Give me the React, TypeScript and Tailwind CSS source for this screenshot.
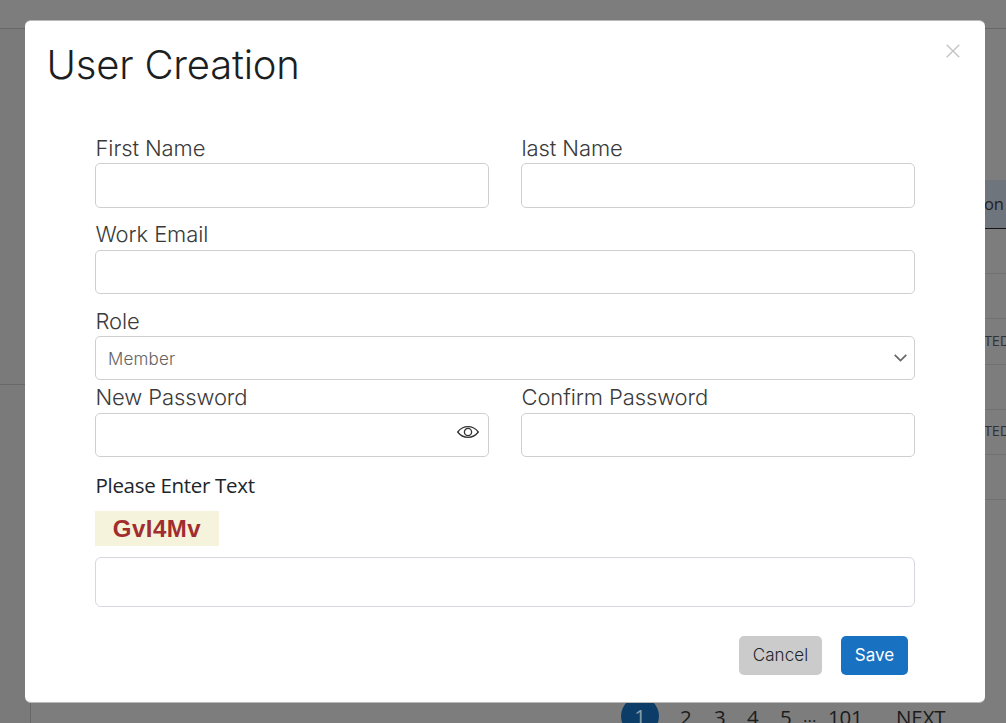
import type { ReactNode } from "react";

const inter = "font-['Inter',sans-serif]";
const field = "block w-full rounded-[5px] border border-[#cfcfcf] bg-white outline-none";

function Label({ children }: { children: ReactNode }) {
  return (
    <label className="block h-[30px] whitespace-nowrap pl-[0.5px] text-[22px] leading-[30px] font-light tracking-[-0.1px] text-[#3a3a3a]">
      {children}
    </label>
  );
}

function Background() {
  const rows = ["", "", "COMPLETED", "", "COMPLETED", ""];
  return (
    <div className="flex h-full flex-col bg-[#7d7d7d] font-['Open_Sans','Noto_Sans',sans-serif]">
      <header className="h-[29px] shrink-0 border-b border-[#686868]" />
      <div className="flex min-h-0 flex-1">
        <aside className="w-[31px] shrink-0 border-r border-[#686868] bg-[#7a7a7a]">
          <div className="h-[356px] border-b border-[#686868]" />
        </aside>
        <main className="flex min-w-0 flex-1 flex-col pt-[151px]">
          <div className="flex h-[49px] shrink-0 items-center justify-end border-b border-[#151515] bg-[#6f757d] pr-[2px] text-[16.500px] text-[#222]">
            Action
          </div>
          {rows.map((text, i) => (
            <div
              key={i}
              className="flex h-[45.2px] shrink-0 items-center justify-end overflow-hidden border-b border-[#717171] pb-px text-[14.500px] tracking-[-0.2px] text-[#303236]"
            >
              <span className="-mr-[4px]">{text}</span>
            </div>
          ))}
          <nav className="mt-[197px] flex h-[38px] shrink-0 items-center pl-[590px] text-[20.500px] text-[#1c1c1c]">
            <span className="flex size-[38px] shrink-0 items-center justify-center rounded-full bg-[#0c3d68] pt-px text-[#8f9ba5]">
              1
            </span>
            <span className="ml-[21px] w-[34px] pt-[2px]">2</span>
            <span className="w-[33px] pt-[2px]">3</span>
            <span className="w-[33px] pt-[2px]">4</span>
            <span className="w-[23px] pt-[2px]">5</span>
            <span className="w-[25px] pb-px text-[17px]">...</span>
            <span className="w-[68px] pt-[2px] tracking-[-0.2px]">101</span>
            <span className="pt-[2px] tracking-[-0.1px]">NEXT</span>
          </nav>
        </main>
      </div>
    </div>
  );
}

export default function App() {
  return (
    <div className="relative h-[723px] w-[1006px] overflow-hidden">
      <Background />
      <div
        role="dialog"
        className={`absolute top-[20px] left-[25px] flex h-[683px] w-[960px] flex-col rounded-[6px] border-y border-[#b9b9b9] bg-white ${inter}`}
      >
        <div className="flex h-[112px] shrink-0 items-start justify-between pt-[20px] pr-[25px] pl-[21.500px]">
          <h1 className="text-[40px] leading-[48px] font-light tracking-[-0.2px] text-[#1c1f22]">User Creation</h1>
          <button aria-label="Close" className="mt-[3px]">
            <svg width="14" height="14" viewBox="0 0 14 14" fill="none" stroke="#c4c4c4" strokeWidth="1.4">
              <path d="M0.7 0.7 13.3 13.3M13.3 0.7 0.7 13.3" />
            </svg>
          </button>
        </div>

        <form className="flex flex-col px-[70px]">
          <div className="flex gap-8">
            <div className="flex-1">
              <Label>First Name</Label>
              <input className={`${field} h-[45px]`} />
            </div>
            <div className="flex-1">
              <Label>last Name</Label>
              <input className={`${field} h-[45px]`} />
            </div>
          </div>
          <div className="mt-[11px]">
            <Label>Work Email</Label>
            <input className={`${field} mt-px h-[44px]`} />
          </div>
          <div className="mt-[12px]">
            <Label>Role</Label>
            <div className={`${field} flex h-[44px] items-center justify-between pr-[7px] pl-[12px]`}>
              <span className="pt-[3px] text-[17px] font-light tracking-[0.2px] text-[#636363]">Member</span>
              <svg width="13" height="8" viewBox="0 0 13 8" fill="none" stroke="#666" strokeWidth="1.7">
                <path d="M0.7 0.8 6.5 6.5 12.3 0.8" />
              </svg>
            </div>
          </div>
          <div className="mt-[2px] flex gap-8">
            <div className="flex-1">
              <Label>New Password</Label>
              <div className={`${field} mt-px flex h-[44px] items-center justify-end pr-[9px] pb-[6px]`}>
                <svg width="22" height="12" viewBox="0 0 22 12" fill="none" stroke="#333" strokeWidth="1.3">
                  <path d="M0.7 6C3.5 2.3 7 .7 11 .7S18.500 2.300 21.300 6C18.500 9.700 15 11.300 11 11.300S3.500 9.700.7 6Z" />
                  <circle cx="11" cy="6" r="3.6" />
                </svg>
              </div>
            </div>
            <div className="flex-1">
              <Label>Confirm Password</Label>
              <input className={`${field} mt-px h-[44px]`} />
            </div>
          </div>
          <p className="mt-[13px] h-[30px] pl-[0.5px] font-['Open_Sans','Noto_Sans',sans-serif] text-[20.500px] leading-[30px] tracking-[-0.3px] text-[#212529]">
            Please Enter Text
          </p>
          <div className="mt-[11px] flex h-[35px] w-[124px] items-center justify-center bg-[#f5f3dc] font-['Liberation_Sans',sans-serif] text-[24px] font-bold tracking-[0.5px] text-[#a12d2f]">
            GvI4Mv
          </div>
          <input className="mt-[11px] block h-[50px] w-full rounded-[6px] border border-[#d5d8df] bg-white outline-none" />
          <div className="mt-[29px] flex justify-end gap-[19px] pr-[7px] text-[17px]">
            <button type="button" className="h-[39px] w-[83px] rounded-[5px] bg-[#cbcbcb] pt-px font-light tracking-[0.1px] text-[#212529]">
              Cancel
            </button>
            <button type="button" className="h-[39px] w-[67px] rounded-[5px] bg-[#1971c2] pt-px text-white">
              Save
            </button>
          </div>
        </form>
      </div>
    </div>
  );
}
